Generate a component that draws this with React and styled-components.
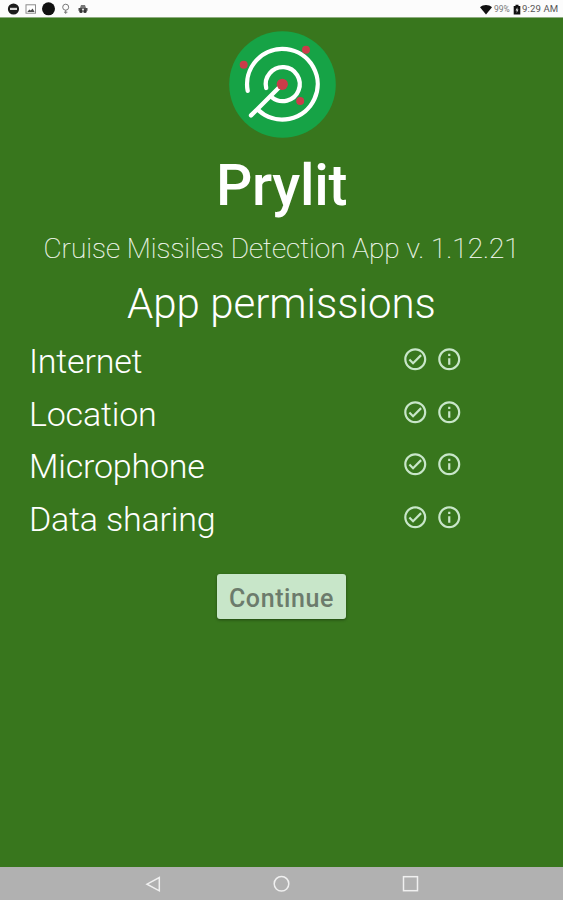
import styled, { createGlobalStyle } from "styled-components"

const GlobalStyle = createGlobalStyle`
    body {
        margin: 0;
        background: #38761d;
        font-family: Roboto, "Liberation Sans", sans-serif;
    }
`

const Screen = styled.div`
    display: flex;
    flex-direction: column;
    height: 100vh;
    overflow: hidden;
    background: #38761d;
    color: #fff;
`

const StatusBar = styled.header`
    display: flex;
    justify-content: space-between;
    height: 18px;
    flex: none;
    background: #fcfcfc;
    border-bottom: 1px solid #8fae81;
    box-sizing: border-box;

    svg {
        display: block;
    }
`

const StatusGroup = styled.div`
    display: flex;
    align-items: center;
    height: 18px;
    padding-right: 4px;
`

const StatusText = styled.span`
    width: ${({ $width }) => $width}px;
    font-size: ${({ $size }) => $size}px;
    letter-spacing: ${({ $spacing }) => $spacing}px;
    line-height: 18px;
    color: ${({ $color }) => $color};
    white-space: nowrap;
`

const Content = styled.main`
    flex: 1;
    display: flex;
    flex-direction: column;
    align-items: center;
    padding-top: 13px;
`

const Logo = styled.svg`
    display: block;
    width: 107px;
    height: 107px;
    flex: none;
    margin-left: 1px;
`

const Title = styled.h1`
    margin: 15px 0 0;
    font-size: 57px;
    font-weight: 500;
    line-height: 66px;
    letter-spacing: -0.3px;
`

const Subtitle = styled.p`
    margin: 10px 0 0;
    font-size: 28px;
    font-weight: 100;
    line-height: 40px;
    white-space: nowrap;
    color: #fff;
    -webkit-text-stroke: 0.2px #e3f1df;
`

const Heading = styled.h2`
    margin: 10px 0 0;
    font-size: 42px;
    font-weight: 300;
    line-height: 50px;
    white-space: nowrap;
`

const PermissionList = styled.ul`
    align-self: stretch;
    list-style: none;
    margin: 6px 0 0;
    padding: 0 101px 0 29px;
`

const Permission = styled.li`
    display: flex;
    justify-content: space-between;
    height: 52.5px;
    line-height: 52px;
    font-size: 34px;
    font-weight: 300;
    letter-spacing: -0.2px;
`

const PermissionIcons = styled.div`
    display: flex;
    gap: 7px;
    padding-top: 11px;

    svg {
        display: block;
        width: 26.5px;
        height: 26.5px;
        fill: #c8e6c9;
    }
`

const ContinueButton = styled.button`
    margin: 29px 0 0;
    padding: 3px 0 0;
    width: 129px;
    height: 45px;
    border: 0;
    border-radius: 3px;
    background: #c8e6c9;
    color: #6c7b6c;
    box-shadow: 0 1px 3px rgba(0, 0, 0, 0.4);
    font-family: inherit;
    font-size: 25px;
    font-weight: 500;
    letter-spacing: 0.6px;
`

const NavBar = styled.nav`
    display: flex;
    justify-content: center;
    align-items: center;
    gap: 111px;
    height: 33px;
    flex: none;
    background: #b1b1b1;

    svg {
        display: block;
        width: 18px;
        height: 18px;
        fill: none;
        stroke: #f0f0f0;
        stroke-width: 1.5;
    }
`

const permissions = ["Internet", "Location", "Microphone", "Data sharing"]

const StatusIcons = () => (
    <svg width="100" height="17" viewBox="0 0 100 17">
        <circle cx="13.5" cy="9" r="5.6" fill="#1c1c1c" />
        <rect x="10" y="7.8" width="7" height="2.2" fill="#d8d8d8" />
        <rect x="26" y="4.8" width="9.5" height="8.4" fill="#fff" stroke="#8c8c8c" strokeWidth="1" />
        <path d="M27.3 12l2-2.6 1.5 1.2 1.8-2.2 2 3.6z" fill="#4a4a4a" />
        <circle cx="48.5" cy="8.8" r="6.5" fill="#111" />
        <circle cx="65.7" cy="7.2" r="3" fill="none" stroke="#777" strokeWidth="1" />
        <path d="M65.7 10.2v3.6M64 12.2h3.4" stroke="#777" strokeWidth="1" />
        <path d="M80 8l1-3h4l1 3z" fill="#777" />
        <path d="M78.5 8h9v2.8h-9z" fill="#4a4a4a" />
        <circle cx="81" cy="11.4" r="1.7" fill="#333" />
        <circle cx="85" cy="11.4" r="1.7" fill="#333" />
        <circle cx="83" cy="9.5" r="1" fill="#eee" />
    </svg>
)

const WifiIcon = () => (
    <svg width="14" height="17" viewBox="0 0 14 17">
        <path d="M0 6.2C3.2 3.4 8.8 3.4 12 6.2L6 13.4z" fill="#111" />
    </svg>
)

const BatteryIcon = () => (
    <svg width="9" height="17" viewBox="0 0 9 17">
        <path d="M2.5 3.7h3v1.2h1.8v8.6H0.7V4.9h1.8z" fill="#111" />
        <path d="M4.4 6.3L2.5 9.6h1.2v2.3l1.8-3.3H4.4z" fill="#ddd" />
    </svg>
)

const RadarLogo = () => (
    <Logo viewBox="0 0 107 107">
        <circle cx="53.5" cy="53.5" r="53.3" fill="#16a346" />
        <g fill="none" stroke="#fff" strokeWidth="4.3" strokeLinecap="round">
            <path d="M18.7 59.8A35.3 35.3 0 1 1 29.6 79.3" />
            <path d="M37.2 57A17 17 0 1 1 43 66.3" />
            <path d="M53.3 53.3L22 84.4" />
        </g>
        <g fill="#cb3c49">
            <circle cx="53.3" cy="53.3" r="5.6" />
            <circle cx="14.7" cy="33.7" r="4" />
            <circle cx="77" cy="18.7" r="4" />
            <circle cx="71.2" cy="70" r="4" />
        </g>
    </Logo>
)

const CheckCircleIcon = () => (
    <svg viewBox="0 0 24 24">
        <path d="M12 2C6.48 2 2 6.48 2 12s4.48 10 10 10 10-4.48 10-10S17.52 2 12 2zm0 18c-4.42 0-8-3.58-8-8s3.58-8 8-8 8 3.58 8 8-3.58 8-8 8zm4.59-12.42L10 14.17l-2.59-2.58L6 13l4 4 8-8z" />
    </svg>
)

const InfoIcon = () => (
    <svg viewBox="0 0 24 24">
        <path d="M11 7h2v2h-2zm0 4h2v6h-2zm1-9C6.48 2 2 6.48 2 12s4.48 10 10 10 10-4.48 10-10S17.52 2 12 2zm0 18c-4.41 0-8-3.59-8-8s3.59-8 8-8 8 3.59 8 8-3.59 8-8 8z" />
    </svg>
)

export default () => {
    return (
        <Screen>
            <GlobalStyle />
            <StatusBar>
                <StatusIcons />
                <StatusGroup>
                    <WifiIcon />
                    <StatusText $width={19} $size={8.5} $spacing={0} $color="#777">99%</StatusText>
                    <BatteryIcon />
                    <StatusText $width={37} $size={9.6} $spacing={0.1} $color="#555">9:29 AM</StatusText>
                </StatusGroup>
            </StatusBar>
            <Content>
                <RadarLogo />
                <Title>Prylit</Title>
                <Subtitle>Cruise Missiles Detection App v. 1.12.21</Subtitle>
                <Heading>App permissions</Heading>
                <PermissionList>
                    {permissions.map(name => (
                        <Permission key={name}>
                            <span>{name}</span>
                            <PermissionIcons>
                                <CheckCircleIcon />
                                <InfoIcon />
                            </PermissionIcons>
                        </Permission>
                    ))}
                </PermissionList>
                <ContinueButton>Continue</ContinueButton>
            </Content>
            <NavBar>
                <svg viewBox="0 0 18 18"><path d="M15.3 2.6v13.2L3 9.2z" /></svg>
                <svg viewBox="0 0 18 18"><circle cx="8.5" cy="8.8" r="7.3" /></svg>
                <svg viewBox="0 0 18 18"><rect x="1.5" y="1.7" width="14" height="14" /></svg>
            </NavBar>
        </Screen>
    )
}
